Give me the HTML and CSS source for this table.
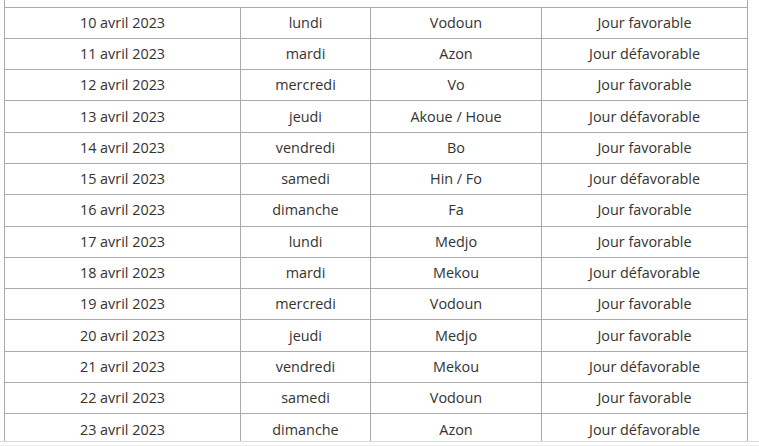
FILE: index.html
```html
<!DOCTYPE html>
<html lang="fr">
<head>
<meta charset="utf-8">
<link rel="stylesheet" href="styles.css">
</head>
<body>
<div class="wrap">
<table class="cal">
<colgroup><col class="c1"><col class="c2"><col class="c3"><col class="c4"></colgroup>
<tbody>
<tr class="top"><td colspan="4"></td></tr>
<tr><td>10 avril 2023</td><td>lundi</td><td>Vodoun</td><td>Jour favorable</td></tr>
<tr><td>11 avril 2023</td><td>mardi</td><td>Azon</td><td>Jour défavorable</td></tr>
<tr><td>12 avril 2023</td><td>mercredi</td><td>Vo</td><td>Jour favorable</td></tr>
<tr><td>13 avril 2023</td><td>jeudi</td><td>Akoue / Houe</td><td>Jour défavorable</td></tr>
<tr><td>14 avril 2023</td><td>vendredi</td><td>Bo</td><td>Jour favorable</td></tr>
<tr><td>15 avril 2023</td><td>samedi</td><td>Hin / Fo</td><td>Jour défavorable</td></tr>
<tr><td>16 avril 2023</td><td>dimanche</td><td>Fa</td><td>Jour favorable</td></tr>
<tr><td>17 avril 2023</td><td>lundi</td><td>Medjo</td><td>Jour favorable</td></tr>
<tr><td>18 avril 2023</td><td>mardi</td><td>Mekou</td><td>Jour défavorable</td></tr>
<tr><td>19 avril 2023</td><td>mercredi</td><td>Vodoun</td><td>Jour favorable</td></tr>
<tr><td>20 avril 2023</td><td>jeudi</td><td>Medjo</td><td>Jour favorable</td></tr>
<tr><td>21 avril 2023</td><td>vendredi</td><td>Mekou</td><td>Jour défavorable</td></tr>
<tr><td>22 avril 2023</td><td>samedi</td><td>Vodoun</td><td>Jour favorable</td></tr>
<tr class="last"><td>23 avril 2023</td><td>dimanche</td><td>Azon</td><td>Jour défavorable</td></tr>
</tbody>
</table>
</div>
<div class="scroll"></div>
</body>
</html>
```
FILE: styles.css
```css
html, body {
  margin: 0;
  padding: 0;
  background: #fff;
}
body {
  font-family: "Open Sans", "Liberation Sans", sans-serif;
  font-size: 14.4px;
  color: #333;
}
.wrap {
  height: 441px;
  overflow: hidden;
  padding-left: 4px;
}
.cal {
  border-collapse: collapse;
  table-layout: fixed;
  width: 743px;
}
.c1 { width: 236px; }
.c2 { width: 130px; }
.c3 { width: 171px; }
.c4 { width: 206px; }
.cal td {
  border: 1px solid #aaa;
  height: 31.3px;
  padding: 0 4px;
  text-align: center;
  vertical-align: middle;
  line-height: 20px;
  box-sizing: border-box;
}
.cal tr.top td {
  border-top: none;
  height: 7px;
  padding: 0;
  line-height: 0;
}
.scroll {
  height: 3px;
  border-top: 1px solid #dcdcdc;
  border-bottom: 1px solid #eee;
}
```
